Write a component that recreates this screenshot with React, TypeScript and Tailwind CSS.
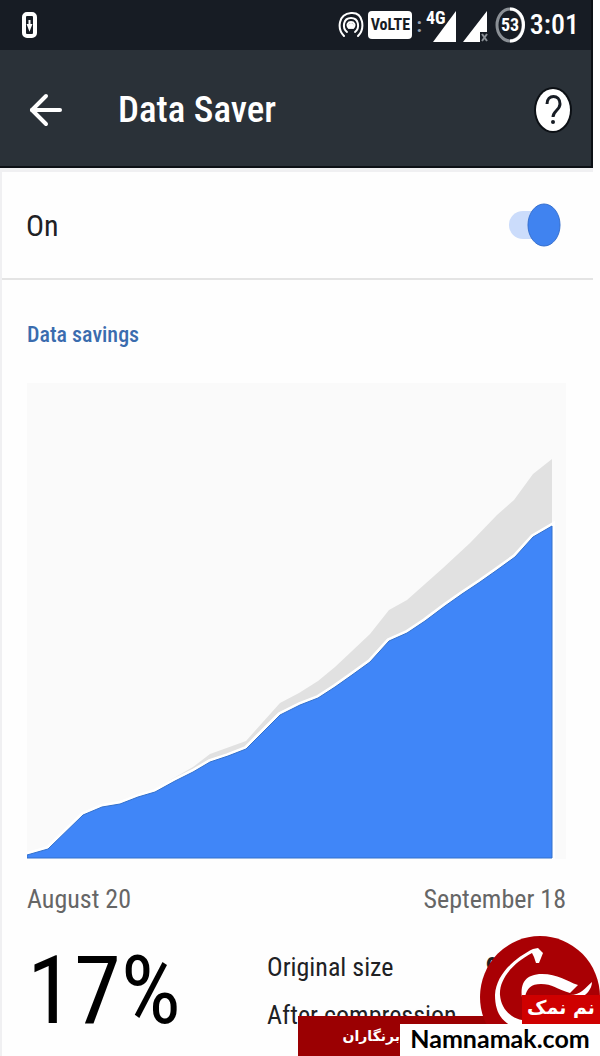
import { ArrowLeft } from 'lucide-react';

const points = {
  original:
    '0,472 21,466 56,432 93,420 128,406 166,384 183,371 219,358 253,320 272,310 291,298 308,284 325,268 343,251 362,227 380,217 416,185 443,160 470,132 487,117 506,91 525,76 525,475 0,475',
  compressed:
    '0,472 21,466 56,432 75,424 93,421 111,414 128,409 148,398 166,389 183,379 201,373 219,366 253,332 273,322 291,315 308,304 325,292 343,279 362,258 380,250 398,238 418,223 435,211 453,199 470,187 488,174 506,154 525,143 525,475 0,475',
};

const StatusBar = () => (
  <div className="flex h-[50px] items-center justify-between bg-[#171c24] pl-[22px] pr-3 text-white">
    <svg className="h-7 w-4" viewBox="0 0 16 28" fill="none" aria-hidden="true">
      <rect x="2" y="3" width="11" height="22" rx="3" stroke="currentColor" strokeWidth="4" />
      <path d="M7.500 9v5M6 14h3l-1.500 4z" stroke="currentColor" strokeWidth="2" />
    </svg>
    <div className="flex items-center gap-1">
      <svg className="h-8 w-[26px]" viewBox="0 0 26 32" fill="none" stroke="currentColor" strokeWidth="2" strokeLinecap="round" aria-hidden="true">
        <path d="M6 27C-1 20 0 5 13 4s14 16 7 23" />
        <path d="M9 23C4 19 5 9 13 9s9 10 4 14" />
        <path d="M11 19c-3-3-1-6 2-6s5 3 2 6" />
        <circle cx="13" cy="17" r="2" fill="currentColor" />
      </svg>
      <span className="flex h-7 w-11 items-center justify-center rounded-sm bg-white text-[16px] font-bold leading-none text-[#171c24]">VoLTE</span>
      <span className="text-[20px] font-bold leading-none text-gray-400">:</span>
      <svg className="h-9 w-8" viewBox="0 0 32 36" fill="currentColor" role="img" aria-label="4G signal">
        <path d="M30 4v31H7z" />
        <text x="0" y="17" fontSize="18" fontWeight="700" stroke="#171c24" strokeWidth="3" paintOrder="stroke">4G</text>
      </svg>
      <svg className="h-9 w-7" viewBox="0 0 28 36" fill="currentColor" aria-hidden="true">
        <path d="M25 4v21h-7v10H1z" />
        <path d="M20 27l5 7M25 27l-5 7" stroke="#8a8f95" strokeWidth="2" />
      </svg>
      <svg className="h-10 w-8" viewBox="0 0 32 40" fill="none" role="img" aria-label="Battery 53%">
        <ellipse cx="16" cy="20" rx="13" ry="16" stroke="#8a8f95" strokeWidth="3" />
        <path d="M16 4c18 0 18 32 0 32" stroke="white" strokeWidth="3" />
        <text x="16" y="26" textAnchor="middle" fontSize="18" fontWeight="700" fill="white">53</text>
      </svg>
      <span className="text-[28px] font-medium leading-none">3:01</span>
    </div>
  </div>
);

const AppBar = () => (
  <header className="flex h-[116px] items-center bg-[#2a3138] pl-[22px] pr-[18px] pt-1 text-white">
    <button type="button" aria-label="Back" className="mr-12">
      <ArrowLeft className="h-12 w-12" strokeWidth={2} />
    </button>
    <h1 className="flex-1 text-[37px] font-medium leading-10">Data Saver</h1>
    <button type="button" aria-label="Help">
      <svg className="h-12 w-10" viewBox="0 0 40 48" fill="none">
        <ellipse cx="20" cy="24" rx="19" ry="23" fill="#0c1015" />
        <ellipse cx="20" cy="24" rx="17" ry="21" fill="white" />
        <path d="M14 18c0-10 13-10 13 0 0 6-7 7-7 13" stroke="#171c24" strokeWidth="3" />
        <circle cx="20" cy="36" r="2" fill="#171c24" />
      </svg>
    </button>
  </header>
);

const Watermark = () => (
  <div className="absolute bottom-0 right-0 h-[122px] w-[302px] overflow-hidden">
    <div className="absolute bottom-0 left-0 h-[41px] w-[240px] bg-[#9b0002] pl-[42px] pt-2">
      <span lang="fa" dir="rtl" className="block w-[60px] whitespace-nowrap font-['DejaVu_Sans',sans-serif] text-[14px] font-bold leading-6 text-white">
        برنگاران
      </span>
    </div>
    <svg className="absolute right-0 top-0 h-[122px] w-[122px]" viewBox="0 0 122 122" aria-hidden="true">
      <ellipse cx="62" cy="62" rx="60" ry="61" fill="#a90004" />
      <path d="M60 13L55 14C39 22 18 38 17 60c0 16 6 26 17 31h10v-6C33 83 23 74 22 60 21 44 35 28 54 18l2 4 2 6h3l4-10z" fill="white" />
      <path d="M44 62C42 48 48 39 64 39c16 0 24 7 36 11l-8 8C79 54 74 49 63 49c-10 0-14 4-16 13z" fill="white" />
      <path d="M92 60c11 0 15-7 22-13 0 7-6 14-13 16z" fill="white" />
    </svg>
    <span lang="fa" dir="rtl" className="absolute bottom-[33px] right-0 h-[29px] w-[78px] bg-[#cf0000] text-center font-['DejaVu_Sans',sans-serif] text-[19px] font-bold leading-6 text-white">
      نم نمک
    </span>
    <a href="#" className="absolute bottom-0 right-0 h-[33px] w-[200px] bg-white text-center font-['Lato',sans-serif] text-[25px] font-bold leading-7 text-black">
      Namnamak.com
    </a>
  </div>
);

const App = () => {
  return (
    <div className="relative overflow-hidden bg-[#fefefe] font-['Roboto_Condensed','Liberation_Sans_Narrow','Roboto',sans-serif] text-[#202124]">
      <div className="pr-[7px]">
        <div className="border-b-2 border-r-2 border-[#0c1015] bg-[#171c24]">
          <StatusBar />
          <AppBar />
        </div>

        <main className="border-l-2 border-t-4 border-[#f0f0f2]">
          <label className="flex h-[108px] items-center justify-between border-b-2 border-[#e4e4e4] pl-6 pr-8 text-[30px]">
            On
            <input type="checkbox" role="switch" defaultChecked className="peer sr-only" />
            <svg className="h-11 w-[54px]" viewBox="0 0 54 44" aria-hidden="true">
              <rect x="2" y="8" width="40" height="28" rx="14" fill="#cbdcfb" />
              <ellipse cx="37" cy="22" rx="16" ry="21" fill="#4083f0" stroke="#356fce" />
            </svg>
          </label>

          <section className="pl-[25px] pr-[27px]">
            <h2 className="pb-[34px] pt-[41px] text-[22px] font-medium leading-7 text-[#3a6cae]">Data savings</h2>
            <svg className="w-full bg-[#fafafa]" viewBox="0 0 539 476" role="img" aria-label="Data savings from August 20 to September 18">
              <polygon points={points.original} fill="#e1e1e1" />
              <polygon points={points.compressed} fill="#4086f8" stroke="white" strokeWidth="6" />
              <polygon points={points.compressed} fill="#4086f8" stroke="#3270cc" strokeWidth="1" />
            </svg>
            <div className="flex justify-between pt-6 text-[26px] leading-8 text-[#666666]">
              <span>August 20</span>
              <span>September 18</span>
            </div>
          </section>

          <section className="flex h-[142px] items-start pl-[25px] pr-[94px] pt-5">
            <div className="w-[240px] text-[95px] leading-[112px] text-black">17%</div>
            <dl className="grid flex-1 grid-cols-[1fr_auto] gap-y-3 pt-[14px] text-[26px] leading-9">
              <dt>Original size</dt>
              <dd className="font-bold">9</dd>
              <dt>After compression</dt>
            </dl>
          </section>
        </main>
      </div>
      <Watermark />
    </div>
  );
};

export default App;
